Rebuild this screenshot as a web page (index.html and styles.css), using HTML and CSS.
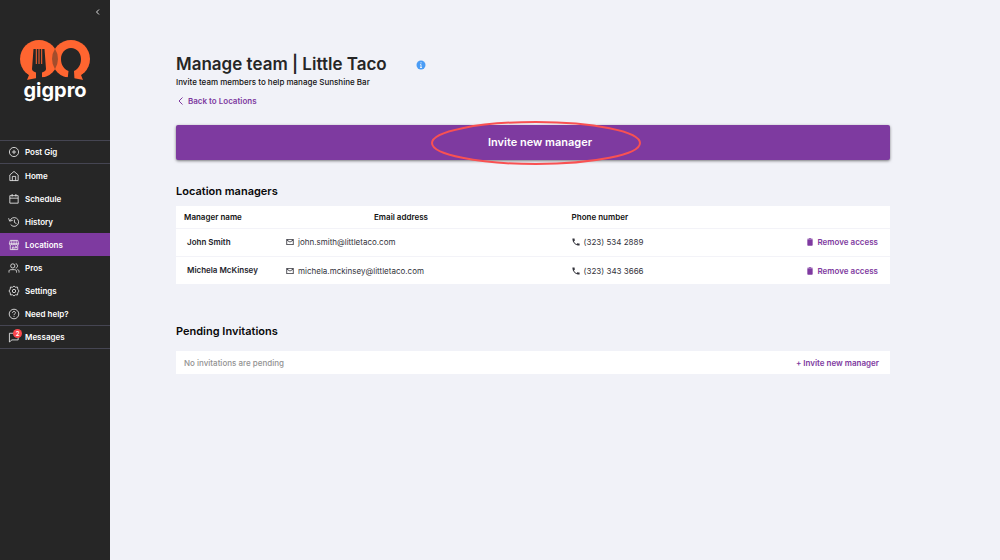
FILE: index.html
```html
<!DOCTYPE html>
<html lang="en">
<head>
<meta charset="utf-8">
<meta name="viewport" content="width=device-width, initial-scale=1">
<title>Manage team | Little Taco</title>
<link rel="stylesheet" href="styles.css">
</head>
<body>
<svg width="0" height="0" class="sprite" aria-hidden="true">
  <symbol id="mail" viewBox="0 0 24 24"><path d="M23 3H1v18h22V3zm-2.500 15.500h-17V8l8.500 5.500L20.500 8v10.500zM12 11 3.500 5.500h17L12 11z"/></symbol>
  <symbol id="phone" viewBox="2 2 20 20"><path d="M6.600 10.800c1.400 2.800 3.800 5.100 6.600 6.600l2.200-2.200c.3-.3.7-.4 1-.2 1.100.4 2.300.6 3.600.6.6 0 1 .4 1 1V20c0 .6-.4 1-1 1C10.600 21 3 13.400 3 4c0-.6.4-1 1-1h3.500c.6 0 1 .4 1 1 0 1.200.2 2.400.6 3.600.1.3 0 .7-.2 1L6.600 10.800z"/></symbol>
  <symbol id="trash" viewBox="0 0 24 24"><path d="M4 6h16v15a2 2 0 0 1-2 2H6a2 2 0 0 1-2-2zM4 2h4l1-1h6l1 1h4v3H4z"/></symbol>
</svg>
<div class="app">
  <aside class="sidebar">
    <button class="collapse" type="button" aria-label="Collapse menu"><svg viewBox="0 0 6 8"><path d="M4 1.500 1.500 4 4 6.500"/></svg></button>
    <a class="brand" href="#">
      <svg class="brand-mark" viewBox="0 0 70 40" aria-hidden="true">
        <g class="brand-shape">
          <circle cx="19" cy="19" r="19"/>
          <circle cx="51" cy="19" r="19"/>
          <path d="M9 31 6.500 40 17 38V30zM61 31 63.500 40 53 38V30z"/>
        </g>
        <path class="brand-overlap" d="M35 8.800A19 19 0 0 1 35 29.200 19 19 0 0 1 35 8.800z"/>
        <g class="brand-cut">
          <path d="M13.500 9H24.500L26 29Q26 31 22 32.500V40H16V32.500Q12 31 12 29z"/>
          <path d="M51 8C57 8 61 13 61 19 61 25 58 29 54 31L54.500 40H47.500L48.500 31C44 29 41 25 41 19 41 13 45 8 51 8z"/>
          <path d="M2 30.500Q5 34 9 35L7 40H0zM68 30.500Q65 34 61 35L63 40H70zM22 37.200H48V40H22z"/>
        </g>
        <path class="brand-tines" d="M16.300 8v16M19 8v16M21.700 8v16"/>
      </svg>
      <span class="brand-name">gigpro</span>
    </a>
    <nav>
      <ul class="menu">
        <li><a class="item ruled" href="#"><svg viewBox="0 0 24 24"><circle cx="12" cy="12" r="11"/><path d="M12 7v10M7 12h10"/></svg>Post Gig</a></li>
        <li><a class="item" href="#"><svg viewBox="0 0 24 24"><path d="M2 9.500 12 1l10 8.500V23H2zM8 23V13h8v10"/></svg>Home</a></li>
        <li><a class="item" href="#"><svg viewBox="0 0 24 24"><path d="M2 4h20v18H2zM2 10h20M7.500 0v6M16.500 0v6"/></svg>Schedule</a></li>
        <li><a class="item" href="#"><svg viewBox="0 0 24 24"><path d="M2.500 9A10.500 10.500 0 1 1 4 18M-1 3l2.500 7L9 8M13 6v7l5 3"/></svg>History</a></li>
        <li><a class="item current" href="#" aria-current="page"><svg viewBox="0 0 24 24"><path d="M3 1h18l2 8H1zM7 1 6.500 9M12 1v8M17 1l.500 8M1 9c0 4 5.500 4 5.500 0 0 4 5.500 4 5.500 0 0 4 5.500 4 5.500 0 0 4 5.500 4 5.500 0M3 12v11h18V12M8 23v-6h4v6M15 16h3v3h-3z"/></svg>Locations</a></li>
        <li><a class="item" href="#"><svg viewBox="0 0 24 24"><circle cx="9" cy="7" r="5"/><path d="M0 23v-3c0-3 2-4 5-4h8c3 0 5 1 5 4v3M16 2c6 0 6 10 0 10M20 16c3 0 4 2 4 4v3"/></svg>Pros</a></li>
        <li><a class="item" href="#"><svg viewBox="0 0 24 24"><path d="m12 0 3.500 3 5-.5.500 5 3 4.500-3 4.500-.5 5-5-.5L12 24l-3.500-3-5 .5-.5-5L0 12l3-4.500.5-5 5 .5z"/><circle cx="12" cy="12" r="4"/></svg>Settings</a></li>
        <li><a class="item" href="#"><svg viewBox="0 0 24 24"><circle cx="12" cy="12" r="11.500"/><path d="M8.500 9.500c0-5 7-5 7 0 0 2-3.500 2-3.500 5M12 16.500v2.500"/></svg>Need help?</a></li>
        <li><a class="item ruled" href="#"><svg viewBox="0 0 24 24"><path d="M1 3h21v16H7l-6 5z"/></svg>Messages<span class="badge">2</span></a></li>
      </ul>
    </nav>
  </aside>
  <main class="content">
    <header class="page-head">
      <div class="title-row">
        <h1>Manage team | Little Taco</h1>
        <button class="info" type="button" aria-label="About this page"><svg viewBox="0 0 10 10"><circle cx="5" cy="5" r="4.500"/><path d="M5 2.300v1.100M4.200 4.500H5v3M4 7.500h2"/></svg></button>
      </div>
      <p>Invite team members to help manage Sunshine Bar</p>
      <a class="back" href="#"><svg viewBox="0 0 6 8"><path d="M4.500.5 1 4l3.500 3.500"/></svg>Back to Locations</a>
    </header>
    <button class="invite" type="button">Invite new manager<svg class="ring" viewBox="0 0 210 44" aria-hidden="true"><ellipse cx="105" cy="22" rx="104" ry="21"/></svg></button>
    <section class="managers">
      <h2>Location managers</h2>
      <table>
        <colgroup><col class="col-name"><col class="col-email"><col class="col-phone"><col></colgroup>
        <thead>
          <tr><th scope="col">Manager name</th><th class="email-head" scope="col">Email address</th><th class="phone-head" scope="col">Phone number</th><td></td></tr>
        </thead>
        <tbody>
          <tr>
            <th scope="row">John Smith</th>
            <td><span class="contact"><svg><use href="#mail"/></svg>john.smith@littletaco.com</span></td>
            <td><span class="contact"><svg><use href="#phone"/></svg>(323) 534 2889</span></td>
            <td class="action"><button class="remove" type="button"><svg><use href="#trash"/></svg>Remove access</button></td>
          </tr>
          <tr>
            <th scope="row">Michela McKinsey</th>
            <td><span class="contact"><svg><use href="#mail"/></svg>michela.mckinsey@littletaco.com</span></td>
            <td><span class="contact"><svg><use href="#phone"/></svg>(323) 343 3666</span></td>
            <td class="action"><button class="remove" type="button"><svg><use href="#trash"/></svg>Remove access</button></td>
          </tr>
        </tbody>
      </table>
    </section>
    <section class="pending">
      <h2>Pending Invitations</h2>
      <div class="pending-row">
        <span>No invitations are pending</span>
        <button type="button">+ Invite new manager</button>
      </div>
    </section>
  </main>
</div>
</body>
</html>
```
FILE: styles.css
```css
* { box-sizing: border-box; }
body {
  margin: 0;
  background: #f1f2f8;
  color: #111;
  font: 500 8px/12px Inter, "Open Sans", sans-serif;
}
button {
  border: 0;
  padding: 0;
  background: none;
  color: inherit;
  font: inherit;
  cursor: pointer;
}
a { color: inherit; text-decoration: none; }
h1, h2, p, ul { margin: 0; padding: 0; }
svg { flex: none; }
.sprite { position: absolute; }
.app { display: flex; min-height: 100vh; }

.sidebar {
  flex: none;
  width: 110px;
  display: flex;
  flex-direction: column;
  background: #262626;
  color: #fff;
}
.collapse { align-self: flex-end; height: 8px; margin: 8px 9px 24px 0; }
.collapse svg { display: block; width: 6px; height: 8px; fill: none; stroke: #ddd; }
.brand {
  display: flex;
  flex-direction: column;
  align-items: center;
  height: 100px;
}
.brand-mark { width: 70px; height: 40px; }
.brand-shape { fill: #ff6530; }
.brand-overlap { fill: #a34d2c; }
.brand-cut { fill: #262626; }
.brand-tines { fill: none; stroke: #ff6530; stroke-width: 1; }
.brand-name { font-size: 20px; font-weight: 700; line-height: 20px; }

.menu { list-style: none; }
.item {
  position: relative;
  display: flex;
  align-items: center;
  gap: 6px;
  height: 23px;
  padding-left: 9px;
  font-weight: 600;
}
.item svg { width: 10px; height: 10px; overflow: visible; fill: none; stroke: #eee; stroke-width: 2; }
.ruled { height: 24px; border: solid #454552; border-width: 1px 0; }
.current { background: #7e3aa0; }
.badge {
  position: absolute;
  top: 3px;
  left: 13px;
  width: 9px;
  border-radius: 50%;
  background: #fb474b;
  font-size: 6px;
  line-height: 9px;
  text-align: center;
}

.content { flex: 1; min-width: 0; padding: 53px 110px 24px 66px; }
.title-row { display: flex; align-items: center; gap: 29px; }
h1 { color: #262626; font-size: 17px; font-weight: 600; line-height: 23px; }
.info svg { display: block; width: 10px; height: 10px; fill: #4a9cf5; }
.info path { fill: none; stroke: #e4f0ff; }
.back { display: inline-flex; align-items: center; gap: 4px; margin-top: 7px; padding-left: 2px; color: #7e3aa0; font-weight: 600; }
.back svg { width: 6px; height: 8px; fill: none; stroke: currentColor; }
.invite {
  position: relative;
  display: block;
  width: 100%;
  height: 35px;
  margin-top: 17px;
  padding: 0 0 2px 14px;
  border-radius: 2px;
  background: #7e3aa0;
  box-shadow: 0 1px 3px rgb(0 0 0 / 50%);
  color: #fff;
  font-size: 11px;
  font-weight: 600;
}
.ring {
  position: absolute;
  top: -4px;
  left: 50%;
  width: 210px;
  height: 44px;
  margin-left: -102px;
  fill: none;
  stroke: #f95152;
  stroke-width: 2;
}
.managers { margin-top: 23px; }
.pending { margin-top: 39px; }
h2 { margin-bottom: 7px; color: #080808; font-size: 11px; font-weight: 600; line-height: 16px; }
table { width: 100%; border-collapse: collapse; table-layout: fixed; background: #fff; }
.col-name { width: 110px; }
.col-email { width: 40%; }
.col-phone { width: 26%; }
th, td { padding: 0; text-align: left; }
thead th { height: 22px; padding-left: 8px; font-weight: 600; }
thead .email-head { padding-left: 88px; }
thead .phone-head { padding-left: 0; }
tbody tr { height: 28px; border-top: 1px solid #f3f3f8; }
tbody th { padding-left: 11px; color: #24242c; font-weight: 600; white-space: nowrap; }
tbody td { color: #33333b; font-weight: 400; }
.contact, .remove { display: inline-flex; align-items: center; gap: 4px; vertical-align: middle; }
.contact svg, .remove svg { width: 8px; height: 8px; fill: currentColor; }
tbody .action { padding-right: 12px; text-align: right; }
.remove { color: #7e3aa0; font-weight: 600; }
.pending h2 { margin-bottom: 12px; }
.pending-row {
  display: flex;
  align-items: center;
  justify-content: space-between;
  height: 23px;
  padding: 0 11px 0 8px;
  background: #fff;
  color: #929292;
}
.pending-row button { color: #7e3aa0; font-weight: 600; }
```
